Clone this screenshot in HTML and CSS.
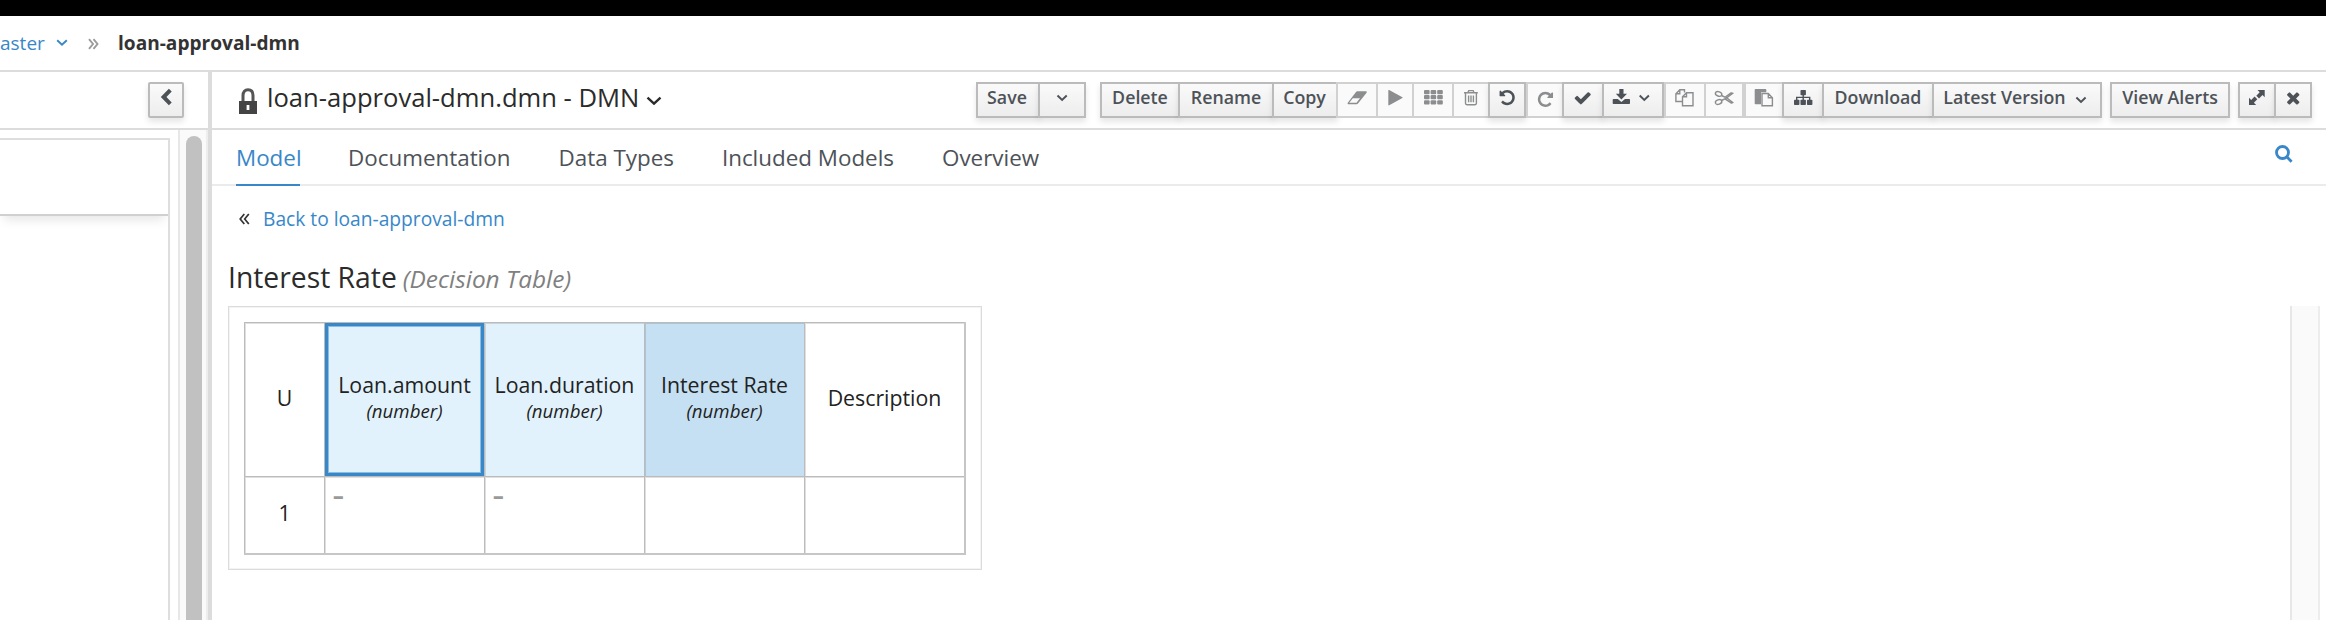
FILE: index.html
```html
<!DOCTYPE html>
<html lang="en">
<head>
<meta charset="utf-8">
<title>loan-approval-dmn</title>
<link rel="stylesheet" href="styles.css">
</head>
<body>
<svg class="defs" width="0" height="0">
  <defs>
    <path id="undo" d="M1664 896q0 156-61 298t-164 245-245 164-298 61q-172 0-327-72.5t-264-204.5q-7-10-6.5-22.5t8.5-20.5l137-138q10-9 25-9 16 2 23 12 73 95 179 147t225 52q104 0 198.5-40.5t163.5-109.5 109.5-163.5 40.5-198.5-40.5-198.5-109.5-163.5-163.5-109.5-198.5-40.5q-98 0-188 35.5t-160 101.5l137 138q31 30 14 69-17 40-59 40h-448q-26 0-45-19t-19-45v-448q0-42 40-59 39-17 69 14l130 129q107-101 244.5-156.5t284.5-55.5q156 0 298 61t245 164 164 245 61 298z"/>
  </defs>
</svg>
<div class="topbar"></div>
<header class="breadcrumb">
  <a class="crumb-link">aster</a>
  <svg class="crumb-caret" width="12" height="8" viewBox="0 0 12 8"><path class="line" d="M1.200 1.200 6 5.800 10.800 1.200"/></svg>
  <svg class="crumb-sep" width="11" height="12" viewBox="0 0 11 12"><path class="line" d="M1 1.200 5 6 1 10.800M5.500 1.200 9.500 6 5.500 10.800"/></svg>
  <strong class="crumb-current">loan-approval-dmn</strong>
</header>
<div class="workspace">
  <aside class="sidebar">
    <div class="sidebar-head">
      <button class="btn collapse"><svg width="32" height="32" viewBox="150 84 32 32"><path class="line heavy" d="M170.300 90.200 163.600 97l6.700 6.800"/></svg></button>
    </div>
    <div class="sidebar-body">
      <div class="explorer"><div class="explorer-card"></div></div>
      <div class="track"><div class="thumb"></div></div>
    </div>
  </aside>
  <main class="editor">
    <div class="editor-head">
      <svg class="lock" width="18" height="26" viewBox="0 0 18 26"><path class="shackle" d="M4 13V7.500C4 3.800 6 1.700 9 1.700S14 3.800 14 7.500V13"/><path d="M0 13H18V26H0zM7.600 17V22H10.400V17z" fill-rule="evenodd"/></svg>
      <span class="title">loan-approval-dmn.dmn - DMN</span>
      <svg class="title-caret" width="16" height="10" viewBox="0 0 16 10"><path class="line" d="M1.500 1.700 8 7.700 14.500 1.700"/></svg>
      <div class="toolbar">
        <div class="group">
          <button class="btn w64">Save</button>
          <button class="btn w48"><svg width="44" height="32" viewBox="1040 84 44 32"><path class="line" d="M1057.500 95.500l4.600 4.500 4.600-4.500"/></svg></button>
        </div>
        <div class="group">
          <button class="btn w80">Delete</button>
          <button class="btn w96">Rename</button>
          <button class="btn w66">Copy</button>
          <button class="btn off w42"><svg width="38" height="32" viewBox="1338 84 38 32"><path d="M1357.300 91.300H1366.200Q1367.200 91.500 1366.600 92.800L1358 103.500Q1357.400 104.200 1356.500 104.200H1348.200Q1347 104 1347.800 102.700L1356 92Q1356.500 91.300 1357.300 91.300ZM1352.800 98.300L1349.300 102.800H1356.500L1360 98.300Z" fill-rule="evenodd"/></svg></button>
          <button class="btn off w38"><svg width="34" height="32" viewBox="1378 84 34 32"><path d="M1388.300 90.300Q1388.500 89.800 1389.200 90.100L1402.400 97.200Q1403 97.700 1402.400 98.100L1389.200 105.300Q1388.500 105.600 1388.300 105Z"/></svg></button>
          <button class="btn off w42"><svg width="38" height="32" viewBox="1414 84 38 32"><g><rect x="1424" y="90" width="5.600" height="4.200" rx="1"/><rect x="1430.600" y="90" width="5.600" height="4.200" rx="1"/><rect x="1437.200" y="90" width="5.600" height="4.200" rx="1"/><rect x="1424" y="95.100" width="5.600" height="4.200" rx="1"/><rect x="1430.600" y="95.100" width="5.600" height="4.200" rx="1"/><rect x="1437.200" y="95.100" width="5.600" height="4.200" rx="1"/><rect x="1424" y="100.200" width="5.600" height="4.200" rx="1"/><rect x="1430.600" y="100.200" width="5.600" height="4.200" rx="1"/><rect x="1437.200" y="100.200" width="5.600" height="4.200" rx="1"/></g></svg></button>
          <button class="btn off w38"><svg width="34" height="32" viewBox="1454 84 34 32"><path class="thin" d="M1464 92.800H1477.800M1468 92.500L1468.700 90.600H1473.200L1473.900 92.500M1465.500 93V103.300Q1465.500 104.700 1466.900 104.700H1475Q1476.400 104.700 1476.400 103.300V93M1468.600 95.500V102.300M1471 95.500V102.300M1473.400 95.500V102.300"/></svg></button>
          <button class="btn w38"><svg width="34" height="32" viewBox="1490 84 34 32"><use href="#undo" transform="translate(1498.300 88.700) scale(.0099)"/></svg></button>
          <button class="btn off apart w38"><svg width="34" height="32" viewBox="1528 84 34 32"><use href="#undo" transform="translate(1554.300 90.500) scale(-.0099 .0099)"/></svg></button>
          <button class="btn w42"><svg width="38" height="32" viewBox="1564 84 38 32"><path transform="translate(1573.500 88.700) scale(.0103)" d="M1671 566q0 40-28 68l-724 724-136 136q-28 28-68 28t-68-28l-136-136-362-362q-28-28-28-68t28-68l136-136q28-28 68-28t68 28l294 295 656-657q28-28 68-28t68 28l136 136q28 28 28 68z"/></svg></button>
          <button class="btn w62"><svg width="58" height="32" viewBox="1604 84 58 32"><path d="M1619.300 89H1623.500V93.700H1627L1621.400 99.600L1615.800 93.700H1619.300ZM1613.500 99H1617.800L1621.400 102L1625 99H1629.200Q1630 99 1630 99.800V103.200Q1630 104 1629.200 104H1613.500Q1612.700 104 1612.700 103.200V99.800Q1612.700 99 1613.500 99Z"/><path class="line" d="M1639.700 95.500l4.600 4.500 4.600-4.500"/></svg></button>
          <button class="btn off apart w42"><svg width="38" height="32" viewBox="1666 84 38 32"><path class="thin" d="M1684.500 92.600V89.800H1679.800L1675.900 93.700V101.500H1682.300M1679.800 89.800V93.700H1675.900M1686.500 92.800H1693V105.700H1682.500V96.800ZM1686.500 92.800V96.800H1682.500"/></svg></button>
          <button class="btn off w40"><svg width="36" height="32" viewBox="1706 84 36 32"><g class="thin"><ellipse cx="1718.600" cy="93.900" rx="3.300" ry="2.200" transform="rotate(20 1718.600 93.900)"/><ellipse cx="1718.600" cy="102" rx="3.300" ry="2.200" transform="rotate(-20 1718.600 102)"/><path d="M1721.500 95.500L1725 97.200L1731 93Q1732 92.700 1732.800 93.300L1725.500 98.700M1721.500 100.500L1725 98.800L1731 102.800Q1732 103.200 1732.800 102.500L1726 97.300"/></g></svg></button>
          <button class="btn off apart w40"><svg width="36" height="32" viewBox="1746 84 36 32"><path d="M1755.500 89H1765.500Q1766.300 89 1766.300 90V92.300H1761V104.300H1755.500Q1754.700 104.300 1754.700 103.500V90Q1754.700 89 1755.500 89Z"/><path class="thin" d="M1762 93.500H1768.300L1772.400 97.800V105.700H1762ZM1768.300 93.500V97.800H1772.400"/></svg></button>
          <button class="btn w42"><svg width="38" height="32" viewBox="1784 84 38 32"><g><rect x="1800.500" y="90" width="5.400" height="5.200" rx=".8"/><rect x="1794" y="99.800" width="5.400" height="5.200" rx=".8"/><rect x="1800.500" y="99.800" width="5.400" height="5.200" rx=".8"/><rect x="1807" y="99.800" width="5.400" height="5.200" rx=".8"/><path class="thin" d="M1803.200 95V100M1796.700 100V97.400H1809.700V100"/></g></svg></button>
          <button class="btn w112">Download</button>
          <button class="btn w170 latest">Latest Version<svg width="12" height="8" viewBox="0 0 12 8"><path class="line" d="M1.400 1.500 6 6l4.600-4.500"/></svg></button>
        </div>
        <div class="group near"><button class="btn w120">View Alerts</button></div>
        <div class="group near">
          <button class="btn w38"><svg width="34" height="32" viewBox="2240 84 34 32"><path d="M2257.500 90H2264.700V97.200L2262.500 95L2259 98.400L2256.300 95.700L2259.700 92.200ZM2249 97.800L2251.200 100L2254.600 96.600L2257.300 99.300L2253.900 102.800L2256.200 105H2249Z"/></svg></button>
          <button class="btn w38"><svg width="34" height="32" viewBox="2276 84 34 32"><path transform="translate(2284 88.600) scale(.0103)" d="M1490 1322q0 40-28 68l-136 136q-28 28-68 28t-68-28l-294-294-294 294q-28 28-68 28t-68-28l-136-136q-28-28-28-68t28-68l294-294-294-294q-28-28-28-68t28-68l136-136q28-28 68-28t68 28l294 294 294-294q28-28 68-28t68 28l136 136q28 28 28 68t-28 68l-294 294 294 294q28 28 28 68z"/></svg></button>
        </div>
      </div>
    </div>
    <nav class="tabs">
      <a class="tab active">Model</a>
      <a class="tab">Documentation</a>
      <a class="tab">Data Types</a>
      <a class="tab">Included Models</a>
      <a class="tab">Overview</a>
      <svg class="search" width="18" height="18" viewBox="0 0 18 18"><circle cx="7.500" cy="7.500" r="6"/><path d="M12 12l4.600 4.700"/></svg>
    </nav>
    <div class="content">
      <div class="back">
        <svg width="11" height="12" viewBox="0 0 11 12"><path class="line" d="M5.300 1 1.200 6l4.100 5M9.800 1 5.700 6l4.100 5"/></svg>
        <a class="back-link">Back to loan-approval-dmn</a>
      </div>
      <h1 class="heading">Interest Rate <em class="kind">(Decision Table)</em></h1>
      <div class="canvas">
        <div class="frame">
          <div class="grid">
            <div class="cell">U</div>
            <div class="cell input selected"><span>Loan.amount</span><em>(number)</em></div>
            <div class="cell input"><span>Loan.duration</span><em>(number)</em></div>
            <div class="cell output"><span>Interest Rate</span><em>(number)</em></div>
            <div class="cell">Description</div>
            <div class="cell">1</div>
            <div class="cell value">–</div>
            <div class="cell value">–</div>
            <div class="cell value"></div>
            <div class="cell value"></div>
          </div>
        </div>
        <div class="canvas-track"></div>
      </div>
    </div>
  </main>
</div>
</body>
</html>
```
FILE: styles.css
```css
* { box-sizing: border-box; }
body {
  margin: 0;
  height: 620px;
  overflow: hidden;
  display: flex;
  flex-direction: column;
  background: #fff;
  color: #333;
  font-family: "Open Sans", "Noto Sans", sans-serif;
  white-space: nowrap;
}
.defs { position: absolute; }
svg { display: block; flex: none; fill: currentColor; }
.line { fill: none; stroke: currentColor; stroke-width: 1.9; }
.heavy { stroke-width: 4; }
.thin { fill: none; stroke: currentColor; stroke-width: 1.4; }

.topbar { flex: none; height: 16px; background: #000; }
.breadcrumb {
  flex: none;
  height: 56px;
  display: flex;
  align-items: center;
  border-bottom: 2px solid #dcdcdc;
  font-size: 19px;
}
.crumb-link { width: 44px; color: #3887c9; }
.crumb-caret { margin-left: 12px; color: #3887c9; }
.crumb-sep { margin: 2px 0 0 20px; color: #9b9b9b; }
.crumb-current { margin-left: 19px; font-weight: 700; font-size: 19.1px; }

.workspace { flex: 1; min-height: 0; display: flex; }
.sidebar { width: 208px; display: flex; flex-direction: column; }
.sidebar-head {
  flex: none;
  height: 58px;
  padding: 10px 24px 0 0;
  display: flex;
  justify-content: flex-end;
  border-bottom: 2px solid #dcdcdc;
}
.sidebar-body { flex: 1; min-height: 0; display: flex; }
.explorer {
  width: 170px;
  margin-top: 8px;
  border-top: 2px solid #dedede;
  border-right: 2px solid #dedede;
}
.explorer-card {
  height: 76px;
  border-bottom: 2px solid #d0d0d0;
  box-shadow: 0 8px 10px -4px rgba(0, 0, 0, .1);
  clip-path: inset(0 0 -20px 0);
}
.track {
  width: 30px;
  margin-left: 8px;
  padding: 6px 4px 0 6px;
  background: #fafafa;
  border-left: 2px solid #e7e7e7;
  border-right: 2px solid #ededed;
}
.thumb { height: 100%; width: 16px; border-radius: 8px 8px 0 0; background: #c1c1c1; }

.editor { flex: 1; min-width: 0; border-left: 4px solid #dcdcdc; display: flex; flex-direction: column; }
.editor-head {
  flex: none;
  height: 58px;
  padding: 0 14px 0 27px;
  display: flex;
  align-items: center;
  border-bottom: 2px solid #dcdcdc;
}
.lock { margin-top: 2px; color: #444; }
.shackle { fill: none; stroke: #555; stroke-width: 3; }
.title { margin: -5px 0 0 10px; font-size: 25.6px; color: #2b2b2b; }
.title-caret { margin: 2px 0 0 7px; color: #2b2b2b; }
.title-caret .line { stroke-width: 2.4; }

.toolbar { margin-left: auto; display: flex; }
.group { display: flex; margin-left: 14px; }
.near { margin-left: 8px; }
.btn {
  flex: none;
  width: 36px;
  height: 36px;
  padding: 0 0 6px;
  display: flex;
  align-items: center;
  justify-content: center;
  border: 2px solid #bbb;
  background: linear-gradient(#fafafa, #ededed);
  box-shadow: 0 4px 6px rgba(3, 3, 3, .1);
  color: #4d5258;
  font: 600 17.8px "Open Sans", "Noto Sans", sans-serif;
}
.btn > svg:only-child { margin-bottom: -6px; }
.btn + .btn { margin-left: -2px; }
.btn + .apart { margin-left: 0; }
.collapse { border-radius: 2px; }
.off { background: #fafafa; border-color: #d1d1d1; color: #8b8d8f; box-shadow: none; }
.w38 { width: 38px; }
.w40 { width: 40px; }
.w42 { width: 42px; }
.w48 { width: 48px; }
.w62 { width: 62px; }
.w64 { width: 64px; padding-right: 2px; }
.w66 { width: 66px; padding-right: 1px; }
.w80 { width: 80px; }
.w96 { width: 96px; }
.w112 { width: 112px; }
.w120 { width: 120px; }
.w170 { width: 170px; }
.latest { padding-right: 4px; }
.latest svg { margin: 0 0 0 9px; }

.tabs {
  flex: none;
  height: 56px;
  padding: 0 33px 0 24px;
  display: flex;
  gap: 48px;
  border-bottom: 2px solid #ebebeb;
  font-size: 22.4px;
  line-height: 55px;
  color: #4d5258;
}
.tab { height: 56px; }
.active { width: 64px; color: #3887c9; border-bottom: 2px solid #3887c9; }
.search { margin: 15px 0 0 auto; fill: none; stroke: #3887c9; stroke-width: 2.8; }

.content { flex: 1; min-height: 0; padding: 21px 6px 0 16px; display: flex; flex-direction: column; }
.back { height: 24px; display: flex; align-items: center; padding-left: 11px; line-height: 24px; font-size: 19.2px; }
.back-link { margin-left: 13px; color: #3887c9; }
.back .line { stroke-width: 1.7; }
.heading { height: 40px; margin: 26px 0 0; font-size: 28.3px; font-weight: 400; line-height: 40px; color: #2b2b2b; }
.kind { margin-left: -1.5px; font-size: 24.4px; line-height: 1; color: #808080; }
.canvas { flex: 1; min-height: 0; margin-top: 9px; display: flex; justify-content: space-between; align-items: flex-start; }
.canvas-track {
  width: 30px;
  height: 100%;
  background: #fafafa;
  border-left: 2px solid #e7e7e7;
  border-right: 2px solid #ededed;
}
.frame { width: 754px; height: 264px; padding: 15px; border: 1px solid #dcdcdc; box-shadow: inset 0 0 0 1px #f3f3f3; }
.grid {
  width: 722px;
  display: grid;
  grid-template-columns: 80px repeat(4, 160px);
  grid-template-rows: 154px 77px;
  border-right: 2px solid #c6c6c6;
  border-bottom: 2px solid #c6c6c6;
}
.cell {
  padding: 0 0 4px;
  display: flex;
  flex-direction: column;
  align-items: center;
  justify-content: center;
  border-left: 1px solid #bbb;
  border-top: 1px solid #bbb;
  box-shadow: inset 1px 1px rgba(0, 0, 0, .12);
  font-size: 21.3px;
  line-height: 28px;
  color: #222;
}
.cell em { font-size: 18.7px; line-height: 23px; }
.input, .output { padding-bottom: 6px; }
.input { background: #e1f2fd; }
.output { background: #c5e0f3; }
.selected { box-shadow: inset 0 0 0 3px #3887c9, inset 0 0 0 4px #8abde3; }
.value { align-items: flex-start; justify-content: flex-start; padding: 4px 0 0 8px; font-weight: 800; color: #999; }
```
